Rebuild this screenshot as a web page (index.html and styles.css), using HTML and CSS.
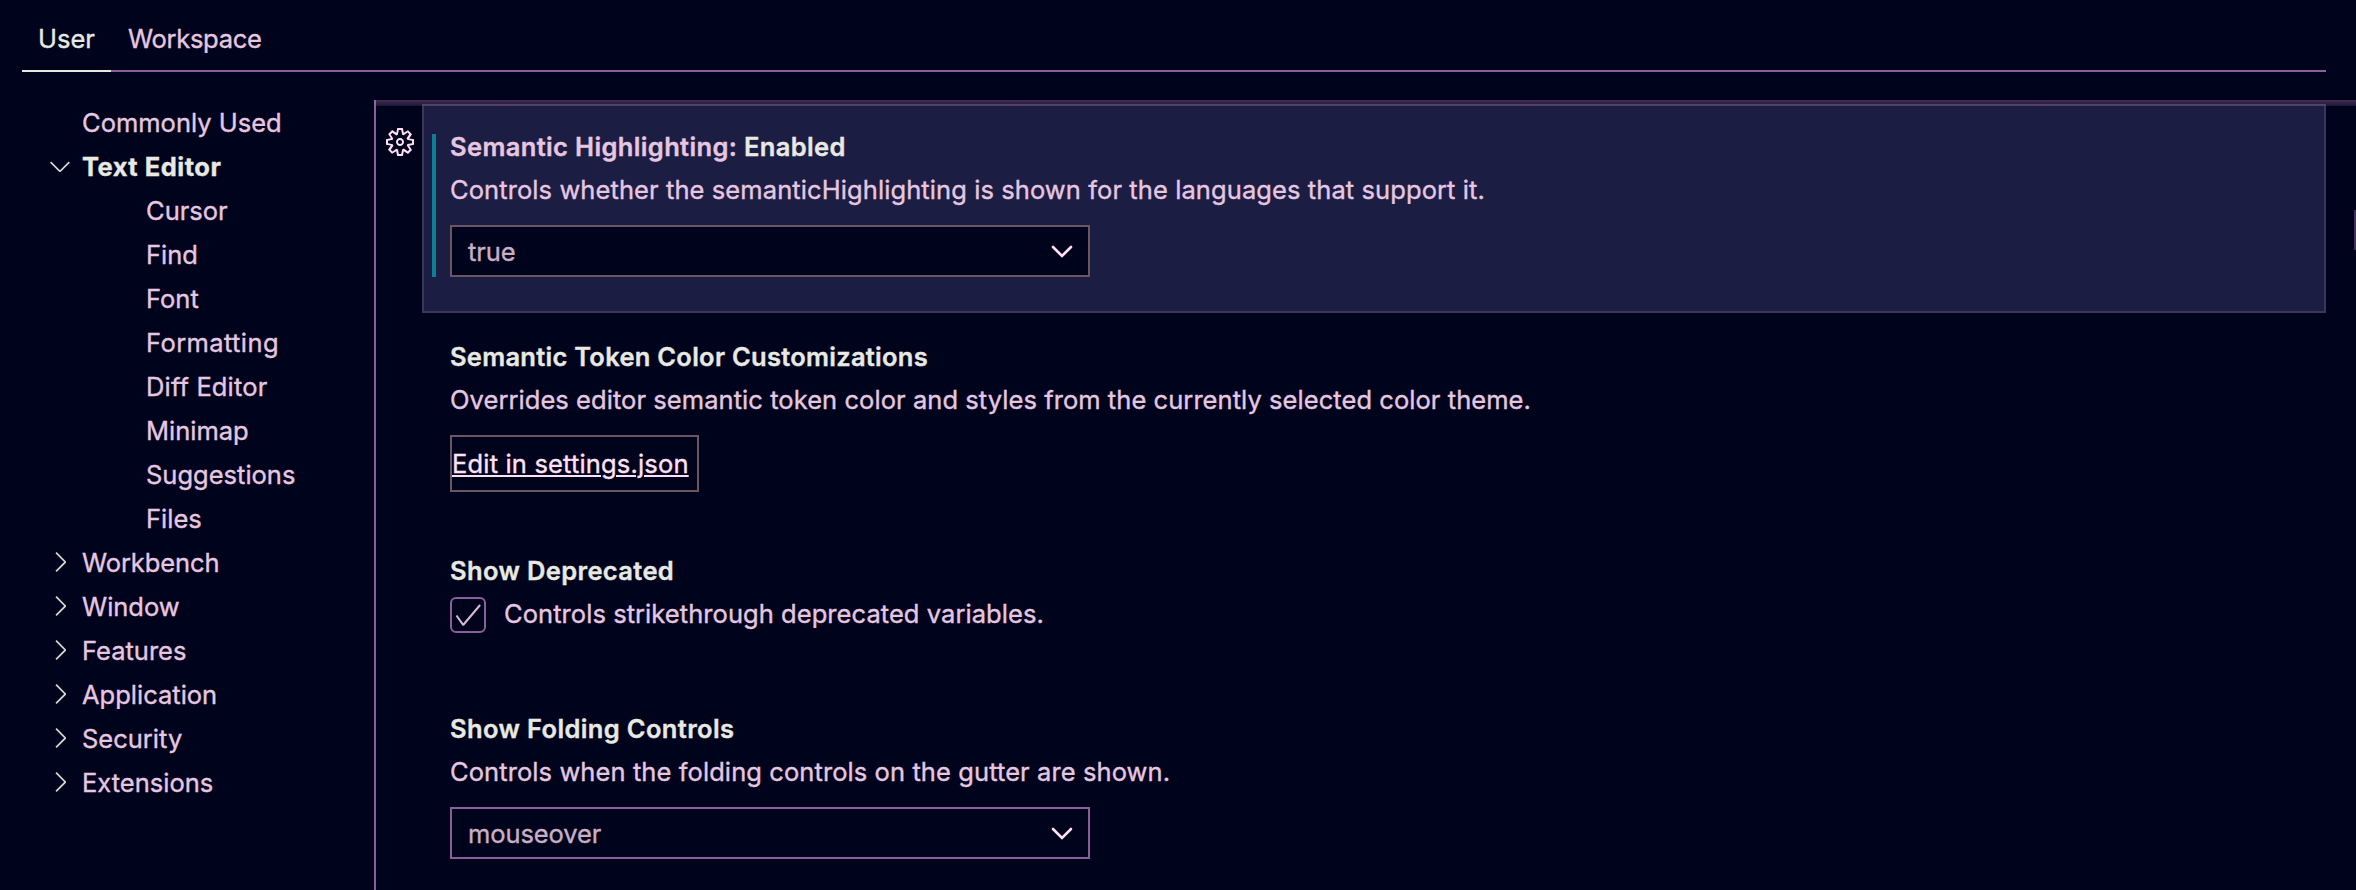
FILE: index.html
```html
<!DOCTYPE html>
<html lang="en">
<head>
<meta charset="utf-8">
<title>Settings</title>
<link rel="stylesheet" href="styles.css">
</head>
<body>
<svg class="defs" width="0" height="0">
  <symbol id="down" viewBox="0 0 16 16"><path d="M7.976 10.072l4.357-4.357.62.618L8.284 11h-.618L3 6.333l.619-.618 4.357 4.357z"/></symbol>
  <symbol id="right" viewBox="0 0 16 16"><path d="M10.072 8.024L5.715 3.667l.618-.62L11 7.716v.618L6.333 13l-.618-.619 4.357-4.357z"/></symbol>
  <symbol id="arrow" viewBox="0 0 22 13"><path d="M2 2l9 9 9-9" fill="none" stroke="currentColor" stroke-width="2.600" stroke-linecap="round"/></symbol>
</svg>
<header class="tabs">
  <div class="tab active">User</div>
  <div class="tab workspace">Workspace</div>
</header>
<div class="main">
  <nav class="toc">
    <div class="row"><span>Commonly Used</span></div>
    <div class="row open"><svg><use href="#down"/></svg><span>Text Editor</span></div>
    <div class="row child">Cursor</div>
    <div class="row child">Find</div>
    <div class="row child">Font</div>
    <div class="row child wide">Formatting</div>
    <div class="row child diff">Diff Editor</div>
    <div class="row child">Minimap</div>
    <div class="row child">Suggestions</div>
    <div class="row child">Files</div>
    <div class="row"><svg><use href="#right"/></svg><span class="tight">Workbench</span></div>
    <div class="row"><svg><use href="#right"/></svg><span>Window</span></div>
    <div class="row"><svg><use href="#right"/></svg><span>Features</span></div>
    <div class="row"><svg><use href="#right"/></svg><span>Application</span></div>
    <div class="row"><svg><use href="#right"/></svg><span>Security</span></div>
    <div class="row"><svg><use href="#right"/></svg><span>Extensions</span></div>
  </nav>
  <main class="settings">
    <div class="shadow"></div>
    <div class="gutter">
      <svg class="gear" viewBox="0 0 16 16"><path fill-rule="evenodd" d="M9.1 4.4L8.600 2H7.400l-.5 2.400-.7.3-2-1.300-.9.8 1.300 2-.2.7-2.400.5v1.200l2.400.5.3.8-1.300 2 .8.8 2-1.300.8.3.4 2.300h1.200l.5-2.400.8-.3 2 1.300.8-.8-1.300-2 .3-.8 2.300-.4V7.400l-2.400-.5-.3-.8 1.300-2-.8-.8-2 1.300-.7-.2zM9.400 1l.5 2.400L12 2.100l2 2-1.400 2.100 2.400.4v2.800l-2.400.5L14 12l-2 2-2.100-1.400-.5 2.400H6.600l-.5-2.400L4 13.900l-2-2 1.400-2.100L1 9.400V6.600l2.400-.5L2.100 4l2-2 2.100 1.400.4-2.400h2.800zm.6 7c0 1.100-.9 2-2 2s-2-.9-2-2 .9-2 2-2 2 .9 2 2zM8 9c.6 0 1-.4 1-1s-.4-1-1-1-1 .4-1 1 .4 1 1 1z"/></svg>
    </div>
    <div class="items">
      <section class="item focused">
        <div class="body modified">
          <h3 class="title"><span class="category">Semantic Highlighting: </span>Enabled</h3>
          <p class="desc">Controls whether the semanticHighlighting is shown for the languages that support it.</p>
          <div class="select muted"><span>true</span><svg><use href="#arrow"/></svg></div>
        </div>
      </section>
      <section class="item customizations">
        <div class="body">
          <h3 class="title">Semantic Token Color Customizations</h3>
          <p class="desc">Overrides editor semantic token color and styles from the currently selected color theme.</p>
          <div class="button"><a>Edit in settings.json</a></div>
        </div>
      </section>
      <section class="item deprecated">
        <div class="body">
          <h3 class="title">Show Deprecated</h3>
          <div class="check-row">
            <div class="checkbox"><svg viewBox="0 0 16 16"><path d="M14.431 3.323l-8.470 10-.79-.036-3.350-4.770.818-.574 2.978 4.240 8.051-9.506.764.646z"/></svg></div>
            <p class="desc">Controls strikethrough deprecated variables.</p>
          </div>
        </div>
      </section>
      <section class="item">
        <div class="body">
          <h3 class="title">Show Folding Controls</h3>
          <p class="desc">Controls when the folding controls on the gutter are shown.</p>
          <div class="select"><span>mouseover</span><svg><use href="#arrow"/></svg></div>
        </div>
      </section>
    </div>
    <div class="track"><div class="thumb"></div></div>
  </main>
</div>
</body>
</html>
```
FILE: styles.css
```css
* { box-sizing: border-box; }
body {
  margin: 0;
  height: 890px;
  display: flex;
  flex-direction: column;
  overflow: hidden;
  background: #00031c;
  color: #e6c7e0;
  font: 25.5px/38px Inter, "Liberation Sans", sans-serif;
  -webkit-text-stroke: 0.35px currentColor;
}
.defs { position: absolute; }
svg { fill: currentColor; flex: none; }

.tabs {
  display: flex;
  height: 72px;
  margin: 0 30px 28px 22px;
  border-bottom: 2px solid #8a5f97;
  flex: none;
}
.tab { height: 72px; padding: 20px 16px 0; }
.tab.active { width: 89px; color: #e8e9e3; border-bottom: 2px solid #e8e9e3; }
.tab.workspace { padding-left: 17px; letter-spacing: -0.29px; }

.main { display: flex; flex: 1; min-height: 0; }
.toc { width: 374px; padding-top: 1px; flex: none; }
.row { display: flex; height: 44px; line-height: 44px; padding-left: 44px; }
.row svg { width: 32px; height: 32px; margin-top: 5px; color: #d4d8cf; }
.row span { margin-left: 6px; }
.row span:first-child { margin-left: 38px; }
.row .tight { letter-spacing: -0.1px; }
.row.child { padding-left: 146px; }
.row.child.wide { letter-spacing: 0.4px; }
.row.child.diff { letter-spacing: 0.15px; }
.row.open { color: #e8e9e3; font-weight: 700; letter-spacing: 0.5px; }

.settings { position: relative; display: flex; flex: 1; border-left: 2px solid #8a5f97; }
.shadow {
  position: absolute;
  inset: 0 0 auto -2px;
  height: 6px;
  background: linear-gradient(rgba(160, 105, 165, 0.42), rgba(160, 105, 165, 0.18));
}
.gutter { width: 46px; padding: 26px 0 0 8px; flex: none; color: #ffe0f5; }
.gear { display: block; width: 32px; height: 32px; }
.items { flex: 1; padding-top: 4px; }
.track { width: 30px; padding-top: 110px; flex: none; }
.thumb { width: 2px; height: 40px; margin-left: 28px; background: #49315c; }

.item { border: 2px solid transparent; padding: 29px 0 0 8px; }
.item.focused { height: 209px; padding-top: 28px; background: #1c1d43; border-color: #3a3758; }
.item.customizations { height: 214px; }
.item.customizations .title { letter-spacing: 0.27px; }
.item.customizations .desc { letter-spacing: 0.06px; }
.item.deprecated { height: 158px; }
.body { border-left: 4px solid transparent; padding-left: 14px; }
.body.modified { border-color: #0d7d98; }
.title {
  margin: 0 0 11px;
  font-size: 25.5px;
  font-weight: 600;
  line-height: 26px;
  letter-spacing: 0.36px;
  color: #e8e9e3;
}
.category { color: #e6c7e0; }
.desc { margin: 0; letter-spacing: 0.09px; white-space: nowrap; }

.select {
  display: flex;
  align-items: center;
  justify-content: space-between;
  width: 640px;
  height: 52px;
  margin-top: 16px;
  padding: 1px 15px 0 16px;
  border: 2px solid #8a5f97;
  background: #00031c;
  color: #c9afc6;
  letter-spacing: -0.1px;
}
.select.muted { border-color: #6a5560; }
.select svg { width: 22px; height: 13px; color: #ffe0f5; }

.button {
  width: 249px;
  height: 57px;
  margin-top: 16px;
  border: 2px solid #6a5560;
  line-height: 53px;
  color: #ffe0f5;
  letter-spacing: 0.17px;
}
.button a { text-decoration: underline; text-decoration-thickness: 2px; text-underline-offset: 2px; }

.check-row { display: flex; gap: 18px; }
.check-row .desc { letter-spacing: 0.06px; }
.checkbox { width: 36px; height: 36px; margin-top: 2px; border: 2px solid #8a5f97; border-radius: 6px; }
.checkbox svg { display: block; width: 32px; height: 32px; color: #d9bcd4; }
```
